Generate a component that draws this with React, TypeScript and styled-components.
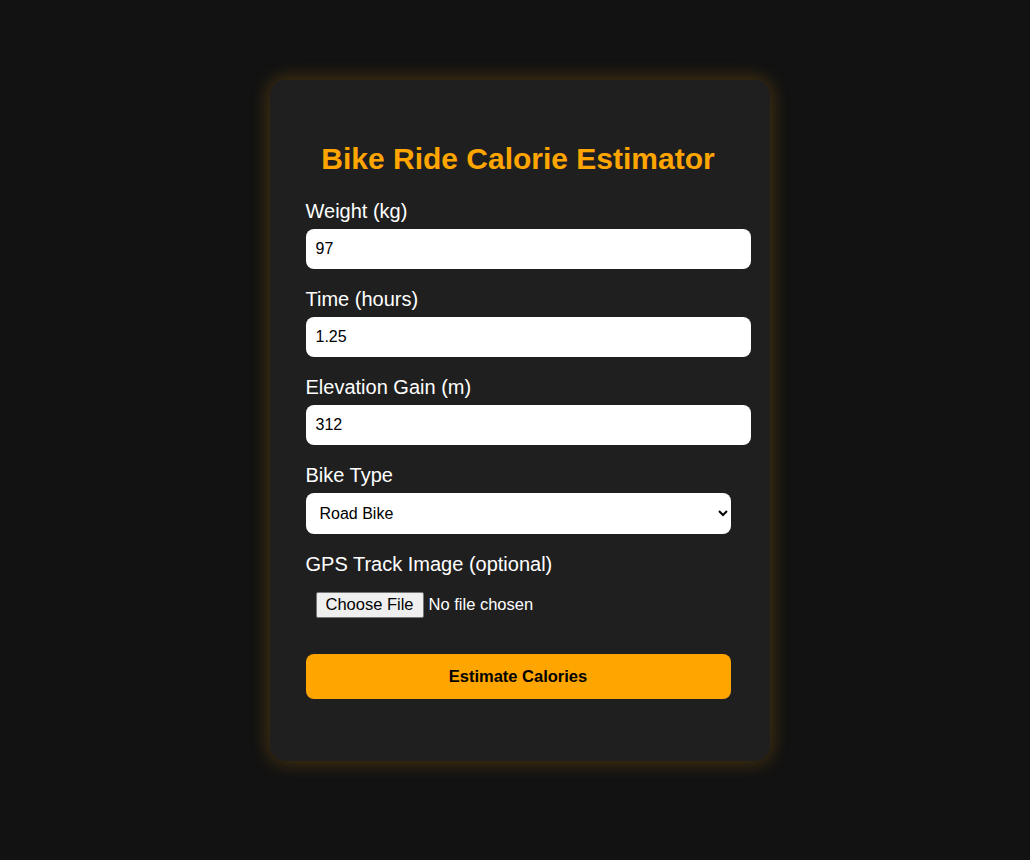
import React from "react";
import styled, { createGlobalStyle } from "styled-components";

const GlobalStyle = createGlobalStyle`
  html, body {
    margin: 0;
    padding: 0;
    background: #121212;
    font-family: "Liberation Sans", Arial, sans-serif;
  }
`;

const Page = styled.div`
  display: flex;
  justify-content: center;
  padding: 80px 0 99px 9px;
`;

const Card = styled.div`
  width: 425px;
  background: #1f1f1f;
  border-radius: 15px;
  padding: 40px 39px 62px 36px;
  box-shadow: 0 0 20px rgba(255, 165, 0, 0.28);
`;

const Title = styled.h1`
  margin: 22px 0 24px;
  color: #ffa500;
  font-size: 30px;
  font-weight: bold;
  text-align: center;
  line-height: normal;
`;

const Form = styled.form`
  display: flex;
  flex-direction: column;
`;

const Label = styled.label`
  display: block;
  color: #ffffff;
  font-size: 20px;
  line-height: 23px;
  margin-bottom: 6px;
`;

const TextInput = styled.input`
  box-sizing: content-box;
  width: 100%;
  height: 20px;
  padding: 10px;
  border: none;
  border-radius: 8px;
  background: #ffffff;
  color: #000000;
  font-family: "Liberation Sans", Arial, sans-serif;
  font-size: 16px;
  margin: 0 0 19px;
  outline: none;
`;

const Select = styled.select`
  box-sizing: border-box;
  width: 100%;
  height: 41px;
  padding: 0 10px;
  border: none;
  border-radius: 8px;
  background: #ffffff;
  color: #000000;
  font-family: "Liberation Sans", Arial, sans-serif;
  font-size: 16px;
  margin: 0 0 19px;
`;

const FileInput = styled.input`
  padding: 10px;
  color: #ffffff;
  font-family: "Liberation Sans", Arial, sans-serif;
  font-size: 16.5px;
  margin: 0;

  &::file-selector-button {
    font-family: "Liberation Sans", Arial, sans-serif;
    font-size: 16.5px;
    padding: 2px 9px 3px;
    margin-right: 5px;
    color: #000000;
    background: #efefef;
    border: 1px solid #767676;
    border-radius: 2px;
  }
`;

const SubmitButton = styled.button`
  width: 100%;
  height: 45px;
  margin-top: 26px;
  border: none;
  border-radius: 8px;
  background: #ffa500;
  color: #000000;
  font-family: "Liberation Sans", Arial, sans-serif;
  font-size: 16.5px;
  font-weight: bold;
  cursor: pointer;
`;

export default function App() {
  return (
    <>
      <GlobalStyle />
      <Page>
        <Card>
          <Title>Bike Ride Calorie Estimator</Title>
          <Form onSubmit={(e) => e.preventDefault()}>
            <Label htmlFor="weight">Weight (kg)</Label>
            <TextInput id="weight" type="number" defaultValue="97" />
            <Label htmlFor="time">Time (hours)</Label>
            <TextInput id="time" type="number" defaultValue="1.25" />
            <Label htmlFor="elev">Elevation Gain (m)</Label>
            <TextInput id="elev" type="number" defaultValue="312" />
            <Label htmlFor="bike">Bike Type</Label>
            <Select id="bike" defaultValue="road">
              <option value="road">Road Bike</option>
              <option value="mtb">Mountain Bike</option>
              <option value="hybrid">Hybrid Bike</option>
            </Select>
            <Label htmlFor="gps">GPS Track Image (optional)</Label>
            <div>
              <FileInput id="gps" type="file" accept="image/*" />
            </div>
            <SubmitButton type="submit">Estimate Calories</SubmitButton>
          </Form>
        </Card>
      </Page>
    </>
  );
}
